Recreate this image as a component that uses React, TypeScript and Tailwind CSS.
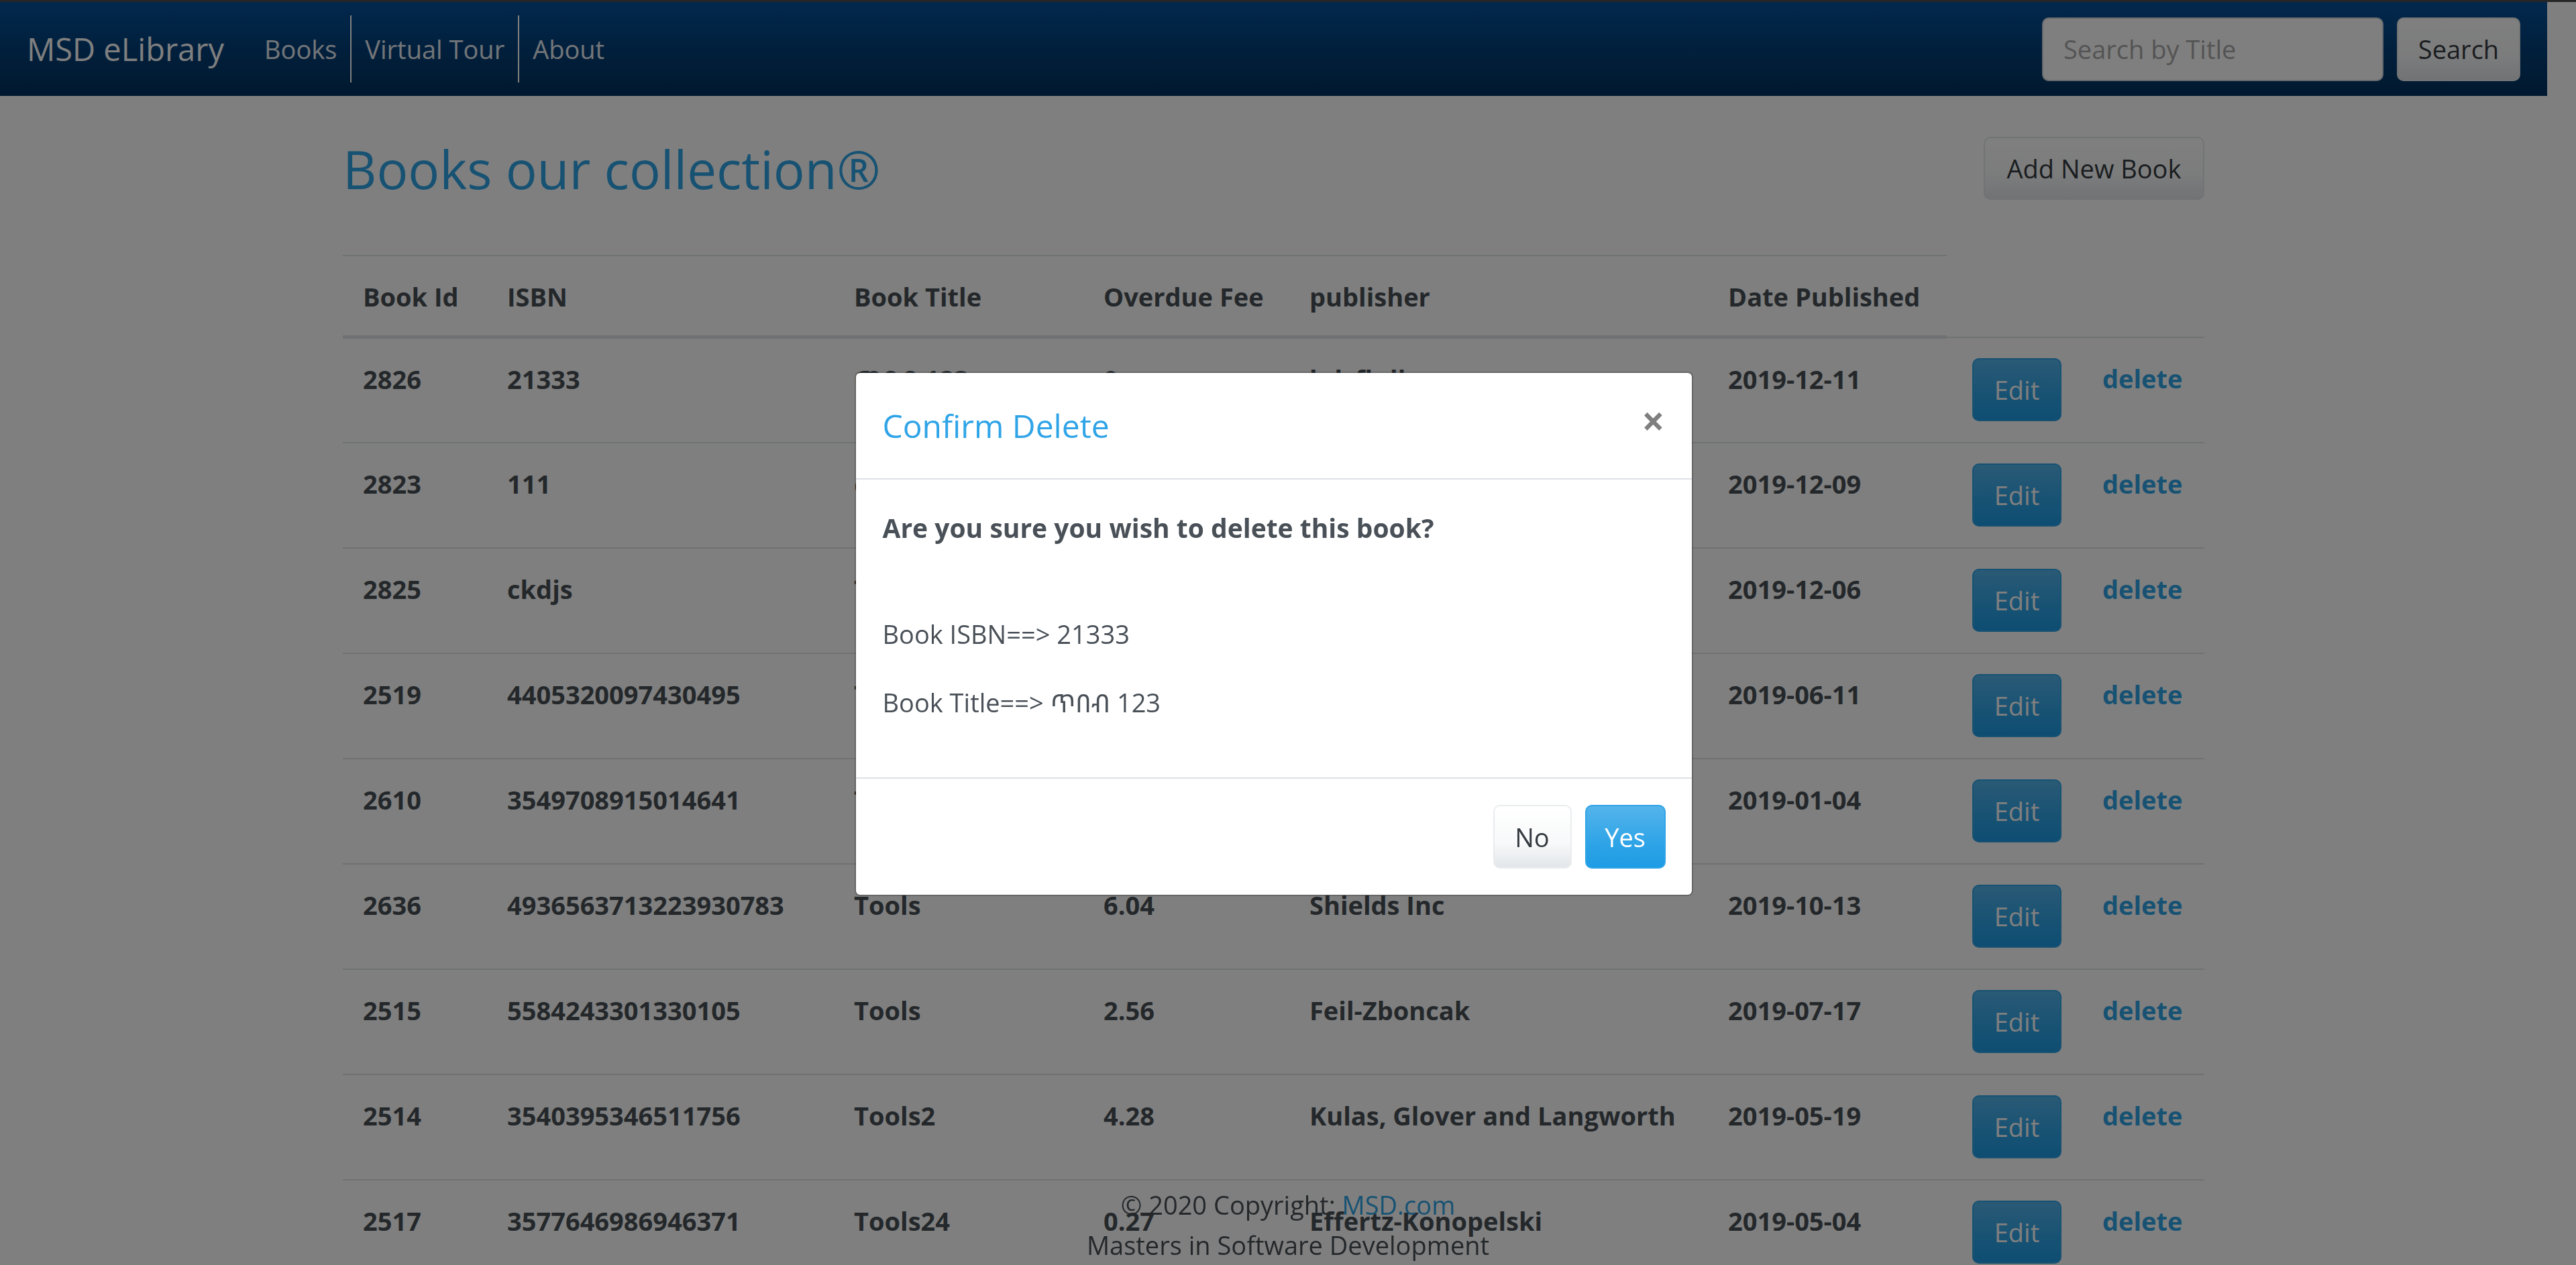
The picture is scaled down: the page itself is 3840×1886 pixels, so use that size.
import React from "react";

type Book = {
  id: string;
  isbn: string;
  title: string;
  fee: string;
  publisher: string;
  date: string;
};

const books: Book[] = [
  { id: "2826", isbn: "21333", title: "ጥበብ 123", fee: "0", publisher: "hdsfhdh", date: "2019-12-11" },
  { id: "2823", isbn: "111", title: "ccc", fee: "0", publisher: "ccc", date: "2019-12-09" },
  { id: "2825", isbn: "ckdjs", title: "Tools", fee: "2.5", publisher: "dkdks", date: "2019-12-06" },
  { id: "2519", isbn: "4405320097430495", title: "Tools", fee: "3.39", publisher: "Hills Group", date: "2019-06-11" },
  { id: "2610", isbn: "3549708915014641", title: "Tools", fee: "9.78", publisher: "Bode LLC", date: "2019-01-04" },
  { id: "2636", isbn: "4936563713223930783", title: "Tools", fee: "6.04", publisher: "Shields Inc", date: "2019-10-13" },
  { id: "2515", isbn: "5584243301330105", title: "Tools", fee: "2.56", publisher: "Feil-Zboncak", date: "2019-07-17" },
  { id: "2514", isbn: "3540395346511756", title: "Tools2", fee: "4.28", publisher: "Kulas, Glover and Langworth", date: "2019-05-19" },
  { id: "2517", isbn: "3577646986946371", title: "Tools24", fee: "0.27", publisher: "Effertz-Konopelski", date: "2019-05-04" },
];

const headers = ["Book Id", "ISBN", "Book Title", "Overdue Fee", "publisher", "Date Published"];
const colWidths = [215, 517, 372, 307, 624, 356, 202, 182];

export default function App() {
  return (
    <div className="relative h-[1886px] w-[3840px] overflow-hidden bg-white font-['Open_Sans','Noto_Sans_Ethiopic',sans-serif] text-[38px] leading-[60px] text-[#495057]">
      <div className="h-[3px] bg-[#4c4c4c]" />
      <div className="w-[3797px]">
        <Navbar />
        <main className="mx-auto w-[2775px] pt-[61px]">
          <div className="flex items-start justify-between">
            <h2 className="text-[78px] leading-[96px] font-medium text-[#2fa4e7]">
              Books our collection®
            </h2>
            <button
              type="button"
              className="h-[94px] w-[329px] rounded-[10px] border-2 border-[#e2e6ea] bg-[linear-gradient(#fff,#f8f9fa_60%,#e2e6ea)] text-[#343a40]"
            >
              Add New Book
            </button>
          </div>
          <BookTable />
        </main>
      </div>

      <footer className="fixed right-0 bottom-0 left-0 text-center leading-[60px] text-[#495057]">
        <div>
          © 2020 Copyright: <a className="text-[#2fa4e7]">MSD.com</a>
        </div>
        <div>Masters in Software Development</div>
      </footer>

      <div className="fixed inset-0 bg-black/50" />
      <ConfirmDelete />
    </div>
  );
}

function Navbar() {
  return (
    <nav className="flex h-[140px] items-center bg-[linear-gradient(#04519b,#033c73_60%,#02325f)] px-[40px]">
      <a className="mr-[40px] text-[47px] leading-[75px] text-white">MSD eLibrary</a>
      <ul className="flex">
        <NavItem label="Books" divider />
        <NavItem label="Virtual Tour" divider />
        <NavItem label="About" />
      </ul>
      <form className="ml-auto flex items-center gap-[20px]">
        <input
          type="text"
          placeholder="Search by Title"
          className="h-[95px] w-[509px] rounded-[10px] border-2 border-[#ced4da] bg-white px-[30px] text-[38px] text-[#495057] placeholder:text-[#a9a9a9]"
        />
        <button
          type="button"
          className="h-[95px] w-[184px] rounded-[10px] border-2 border-[#e2e6ea] bg-[linear-gradient(#fff,#f8f9fa_60%,#e2e6ea)] text-[#343a40]"
        >
          Search
        </button>
      </form>
    </nav>
  );
}

function NavItem({ label, divider }: { label: string; divider?: boolean }) {
  return (
    <li>
      <a
        className={
          divider
            ? "block h-[100px] border-r-2 border-white px-[20px] leading-[100px] text-white/90"
            : "block h-[100px] px-[20px] leading-[100px] text-white/90"
        }
      >
        {label}
      </a>
    </li>
  );
}

function BookTable() {
  return (
    <table className="mt-[80px] w-full table-fixed border-collapse text-left font-bold">
      <colgroup>
        {colWidths.map((w, i) => (
          <col key={i} style={{ width: w }} />
        ))}
      </colgroup>
      <thead>
        <tr>
          {headers.map((h) => (
            <th
              key={h}
              className="border-t-2 border-b-[5px] border-[#dee2e6] px-[30px] pt-[30px] pb-[28px] align-bottom whitespace-nowrap"
            >
              {h}
            </th>
          ))}
        </tr>
      </thead>
      <tbody>
        {books.map((b) => (
          <tr key={b.id}>
            <Cell>{b.id}</Cell>
            <Cell>{b.isbn}</Cell>
            <Cell>{b.title}</Cell>
            <Cell>{b.fee}</Cell>
            <Cell>{b.publisher}</Cell>
            <Cell>{b.date}</Cell>
            <td className="border-t-2 border-[#dee2e6] pt-[30px] pr-[20px] pb-[31px] pl-[38px] align-top">
              <button
                type="button"
                className="h-[94px] w-[133px] rounded-[10px] border-2 border-[#2fa4e7] bg-[linear-gradient(#54b4eb,#2fa4e7_60%,#1d9ce5)] font-normal text-white"
              >
                Edit
              </button>
            </td>
            <Cell>
              <a className="text-[#2fa4e7]">delete</a>
            </Cell>
          </tr>
        ))}
      </tbody>
    </table>
  );
}

function Cell({ children }: { children: React.ReactNode }) {
  return (
    <td className="border-t-2 border-[#dee2e6] px-[30px] pt-[30px] pb-[31px] align-top whitespace-nowrap">
      {children}
    </td>
  );
}

function ConfirmDelete() {
  return (
    <div className="fixed inset-y-0 left-0 flex w-[3797px] items-center justify-center">
      <div className="mt-[4px] w-[1250px] rounded-[8px] border-2 border-black/20 bg-white bg-clip-padding">
        <div className="flex items-start justify-between border-b-2 border-[#dee2e6] px-[40px] pt-[41px] pb-[41px]">
          <h5 className="text-[48px] leading-[75px] font-medium text-[#2fa4e7]">Confirm Delete</h5>
          <button
            type="button"
            className="-m-[40px] p-[40px] text-[60px] leading-[60px] font-bold text-black/50"
          >
            ×
          </button>
        </div>
        <div className="px-[40px] pt-[42px] pb-[40px]">
          <p className="mb-[98px] text-[39px] font-bold">Are you sure you wish to delete this book?</p>
          <p className="mb-[42px]">Book ISBN==&gt; 21333</p>
          <p className="mb-[42px]">Book Title==&gt; ጥበብ 123</p>
        </div>
        <div className="flex justify-end gap-[20px] border-t-2 border-[#dee2e6] p-[39px]">
          <button
            type="button"
            className="h-[95px] w-[117px] rounded-[10px] border-2 border-[#e9ecef] bg-[linear-gradient(#fff,#f8f9fa_60%,#e2e6ea)] text-[#343a40]"
          >
            No
          </button>
          <button
            type="button"
            className="h-[95px] w-[120px] rounded-[10px] border-2 border-[#2fa4e7] bg-[linear-gradient(#54b4eb,#2fa4e7_60%,#1d9ce5)] text-white"
          >
            Yes
          </button>
        </div>
      </div>
    </div>
  );
}
